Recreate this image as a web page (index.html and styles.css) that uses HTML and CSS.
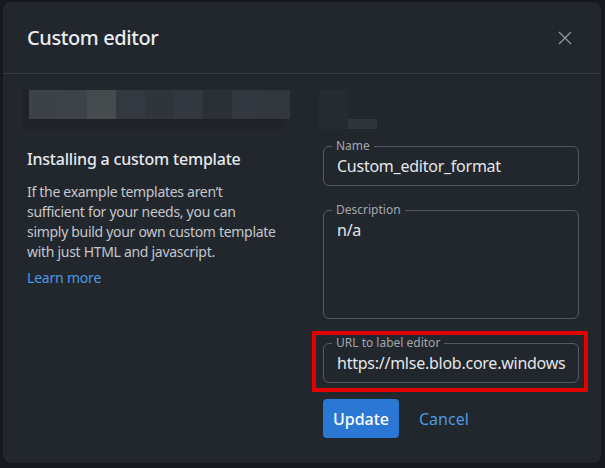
FILE: index.html
```html
<!DOCTYPE html>
<html>
<head>
<meta charset="utf-8">
<link rel="stylesheet" href="styles.css">
</head>
<body>
<div class="page">
  <div class="modal">
    <div class="modal-header">
      <h1 class="title">Custom editor</h1>
      <button class="close" aria-label="Close">
        <svg width="14" height="14" viewBox="0 0 14 14"><path d="M1 1 L13 13 M13 1 L1 13" stroke="#8f959c" stroke-width="1.4" fill="none"/></svg>
      </button>
    </div>
    <div class="modal-body">
      <div class="blur-row">
        <div class="blur-a">
          <span class="px p1"></span><span class="px p2"></span><span class="px p3"></span><span class="px p4"></span><span class="px p5"></span><span class="px p6"></span><span class="px p7"></span><span class="px p8"></span><span class="px p9"></span>
        </div>
        <div class="blur-b">
          <span class="pb1"></span><span class="pb2"></span>
        </div>
      </div>
      <div class="columns">
        <div class="info">
          <h2 class="info-title">Installing a custom template</h2>
          <p class="info-text">If the example templates aren’t<br>sufficient for your needs, you can<br>simply build your own custom template<br>with just HTML and javascript.</p>
          <a class="link" href="#">Learn more</a>
        </div>
        <div class="form">
          <fieldset class="field">
            <legend>Name</legend>
            <div class="value">Custom_editor_format</div>
          </fieldset>
          <fieldset class="field field-tall">
            <legend>Description</legend>
            <div class="value">n/a</div>
          </fieldset>
          <div class="highlight">
            <fieldset class="field">
              <legend>URL to label editor</legend>
              <div class="value clip">https://mlse.blob.core.windows.net/editor</div>
            </fieldset>
          </div>
          <div class="actions">
            <button class="btn-primary">Update</button>
            <button class="btn-link">Cancel</button>
          </div>
        </div>
      </div>
    </div>
  </div>
</div>
</body>
</html>
```

FILE: styles.css
```css
* { box-sizing: border-box; }
html, body { margin: 0; padding: 0; }
body {
  background: #16191d;
  font-family: "Noto Sans", "Open Sans", sans-serif;
  width: 605px;
  height: 468px;
  overflow: hidden;
}
.page {
  padding: 2px 4px 5px 3px;
}
.modal {
  width: 598px;
  height: 461px;
  background: #22262d;
  border-radius: 8px;
  display: flex;
  flex-direction: column;
}
.modal-header {
  height: 72px;
  border-bottom: 1px solid #363a42;
  display: flex;
  align-items: center;
  justify-content: space-between;
  padding: 0 29px 0 24px;
}
.title {
  margin: 0;
  font-size: 20px;
  font-weight: 500;
  color: #e9ebee;
  letter-spacing: -0.4px;
}
.close {
  background: none;
  border: 0;
  padding: 0;
  width: 14px;
  height: 14px;
  display: flex;
}
.modal-body {
  padding: 16px 22px 0 24px;
}
.blur-row {
  display: flex;
  gap: 29px;
  height: 39px;
  padding-left: 2px;
}
.blur-a {
  display: flex;
  height: 29px;
  box-shadow: -6px 0 0 #1e2127, -6px 10px 0 #1f2329;
}
.px { width: 29px; height: 29px; display: block; }
.p1 { background: #3d4148; }
.p2 { background: #3e4249; }
.p3 { background: #464b4d; }
.p4 { background: #343840; }
.p5 { background: #30343b; }
.p6 { background: #33373f; }
.p7 { background: #2b2f36; }
.p8 { background: #33373f; }
.p9 { background: #32363d; }
.blur-b {
  display: flex;
  align-items: flex-end;
}
.pb1 { width: 29px; height: 39px; background: #262a31; display: block; }
.pb2 { width: 29px; height: 10px; background: #30343b; display: block; }
.columns {
  display: grid;
  grid-template-columns: 272px 256px;
  column-gap: 24px;
  margin-top: 10px;
}
.info {
  padding-top: 9px;
}
.info-title {
  margin: 0;
  font-size: 16px;
  font-weight: 500;
  color: #e6e8eb;
  line-height: 22px;
  letter-spacing: -0.2px;
}
.info-text {
  margin: 12px 0 0;
  font-size: 14px;
  line-height: 20px;
  color: #c4c7cc;
  letter-spacing: -0.3px;
  white-space: nowrap;
}
.link {
  display: inline-block;
  margin-top: 6px;
  font-size: 14px;
  line-height: 20px;
  color: #4b9be3;
  text-decoration: none;
  letter-spacing: -0.2px;
}
.form {
  display: flex;
  flex-direction: column;
  gap: 17px;
}
.field {
  margin: 0;
  border: 1px solid #555a62;
  border-radius: 6px;
  padding: 0 12px 8px 13px;
  min-width: 0;
}
.field legend {
  font-size: 12px;
  line-height: 14px;
  color: #a3a7ad;
  padding: 0 4px;
  margin-left: -5px;
}
.field .value {
  font-size: 16px;
  line-height: 22px;
  color: #e4e6e9;
  margin-top: 2px;
  letter-spacing: -0.25px;
}
.field-tall { height: 116px; }
.clip {
  white-space: nowrap;
  overflow: hidden;
}
.highlight {
  position: relative;
}
.highlight::after {
  content: "";
  position: absolute;
  top: -5px;
  left: -11px;
  right: -9px;
  bottom: -9px;
  border: 4px solid #e00000;
  pointer-events: none;
}
.actions {
  display: flex;
  align-items: center;
  gap: 20px;
  margin-top: -1px;
}
.btn-primary {
  width: 76px;
  height: 39px;
  border: 0;
  border-radius: 4px;
  background: #2b78d4;
  color: #ffffff;
  font-family: inherit;
  font-size: 16px;
  font-weight: 500;
  padding: 0;
}
.btn-link {
  border: 0;
  background: none;
  color: #4b9be3;
  font-family: inherit;
  font-size: 16px;
  padding: 0;
}
```
